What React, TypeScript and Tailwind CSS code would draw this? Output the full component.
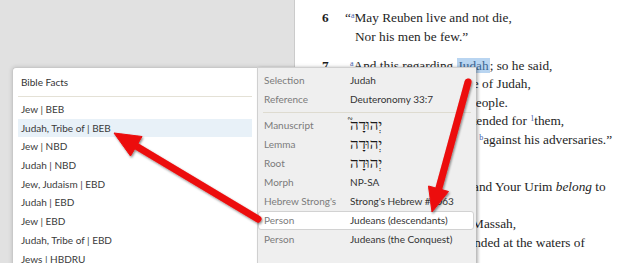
import React from "react";

const Sup = ({ children }: { children: React.ReactNode }) => (
  <sup className="text-[8px] text-[#3f63b0]">{children}</sup>
);

const facts = [
  "Jew | BEB",
  "Judah, Tribe of | BEB",
  "Jew | NBD",
  "Judah | NBD",
  "Jew, Judaism | EBD",
  "Judah | EBD",
  "Jew | EBD",
  "Judah, Tribe of | EBD",
  "Jews | HBDRU",
];

const InfoRow = ({
  label,
  value,
  hebrew,
  boxed,
}: {
  label: string;
  value: string;
  hebrew?: boolean;
  boxed?: boolean;
}) => (
  <div
    className={
      boxed
        ? "flex h-[19px] items-center mr-[2px] pl-[5px] bg-white border border-[#d2d2d2] rounded-[3px]"
        : "flex h-[19px] items-center pl-[6px]"
    }
  >
    <span className="w-[86px] shrink-0 text-[#7b7b7b]">{label}</span>
    {hebrew ? (
      <span className="text-[15px] leading-[19px] text-[#1a1a1a]" style={{ fontFamily: '"DejaVu Serif", serif' }}>
        {value}
      </span>
    ) : (
      <span className="text-[#333]">{value}</span>
    )}
  </div>
);

const Verse = ({ n, children }: { n: string; children: React.ReactNode }) => (
  <div className="flex mb-[10.5px]">
    <span className="w-[33px] shrink-0 font-bold">{n}</span>
    <div>{children}</div>
  </div>
);

const Arrows = () => (
  <svg className="absolute inset-0 pointer-events-none" width="620" height="263">
    <defs>
      <filter id="sh" x="-20%" y="-20%" width="140%" height="140%">
        <feDropShadow dx="1" dy="1.5" stdDeviation="1" floodColor="#000" floodOpacity="0.45" />
      </filter>
    </defs>
    <g filter="url(#sh)" fill="#ec0a0a" stroke="#ec0a0a">
      <line x1="468" y1="82" x2="438.4" y2="190" strokeWidth="7" strokeLinecap="round" />
      <polygon points="432,212 448.5,191.5 428.5,186" strokeWidth="1" strokeLinejoin="round" />
      <line x1="258" y1="219" x2="136" y2="146" strokeWidth="7" strokeLinecap="round" />
      <polygon points="114,133 142,136.5 130.5,156" strokeWidth="1" strokeLinejoin="round" />
    </g>
  </svg>
);

export default function App() {
  return (
    <div className="relative w-[620px] h-[263px] overflow-hidden flex">
      <div className="w-[295px] shrink-0 bg-[#e1e1e1] border-r border-[#cbcbcb]" />
      <div
        className="flex-1 bg-white pl-[27px] pt-[9px] text-[13.3px] leading-[18.5px] text-[#1e1e1e]"
        style={{ fontFamily: '"Liberation Serif", serif' }}
      >
        <Verse n="6">
          <div>
            <span className="-ml-[10px]">
              “<Sup>a</Sup>
            </span>
            May Reuben live and not die,
          </div>
          <div>Nor his men be few.”</div>
        </Verse>
        <Verse n="7">
          <div>
            <span className="-ml-[5px]">
              <Sup>a</Sup>
            </span>
            And this regarding{" "}
            <span className="bg-[#b9d5f1] text-[#3d6591] px-[1px]">Judah</span>; so he said,
          </div>
          <div className="-ml-[12px]">
            “Hear, O <span className="text-[11px]">LORD</span>, the voice of Judah,
          </div>
          <div>And bring him to his people.</div>
          <div>
            With his hands he contended for <Sup>1</Sup>them,
          </div>
          <div className="-ml-[4px]">
            And may You be a help <Sup>b</Sup>against his adversaries.”
          </div>
        </Verse>
        <Verse n="8">
          <div>Of Levi he said,</div>
          <div className="ml-[3px]">
            “Let Your Thummim and Your Urim <i>belong</i> to
          </div>
          <div className="pl-[14px]">your godly man,</div>
          <div>Whom You proved at Massah,</div>
          <div>With whom You contended at the waters of</div>
          <div className="pl-[14px]">Meribah;</div>
        </Verse>
      </div>

      <div
        className="absolute left-[12px] top-[67px] h-[200px] flex text-[10px] shadow-[0_0_4px_rgba(0,0,0,0.15)] rounded-tl-[4px]"
        style={{ fontFamily: "Lato, sans-serif" }}
      >
        <div className="w-[245px] bg-white border-l border-t border-[#c9c9c9] rounded-tl-[4px] px-[5px]">
          <div className="h-[29px] flex items-center pl-[3px] border-b border-[#e4e1d6] text-[#333]">
            Bible Facts
          </div>
          <div className="pt-[3px] text-[#3a3a3a]">
            {facts.map((f, i) => (
              <div
                key={i}
                className={
                  i === 1
                    ? "h-[18.7px] leading-[18.7px] pl-[3px] bg-[#e8f1f8]"
                    : "h-[18.7px] leading-[18.7px] pl-[3px]"
                }
              >
                {f}
              </div>
            ))}
          </div>
        </div>
        <div className="w-[219px] bg-[#efefef] border-l border-t border-[#d0d0d0] pt-[3px] shadow-[2px_1px_3px_rgba(0,0,0,0.25)]">
          <InfoRow label="Selection" value="Judah" />
          <InfoRow label="Reference" value="Deuteronomy 33:7" />
          <div className="mx-[5px] my-[3px] border-t border-[#dedbd0]" />
          <InfoRow label="Manuscript" value="יְהוּדָה֮" hebrew />
          <InfoRow label="Lemma" value="יְהוּדָה" hebrew />
          <InfoRow label="Root" value="יְהוּדָה" hebrew />
          <InfoRow label="Morph" value="NP-SA" />
          <InfoRow label="Hebrew Strong's" value="Strong's Hebrew #3063" />
          <InfoRow label="Person" value="Judeans (descendants)" boxed />
          <InfoRow label="Person" value="Judeans (the Conquest)" />
        </div>
      </div>

      <Arrows />
    </div>
  );
}
